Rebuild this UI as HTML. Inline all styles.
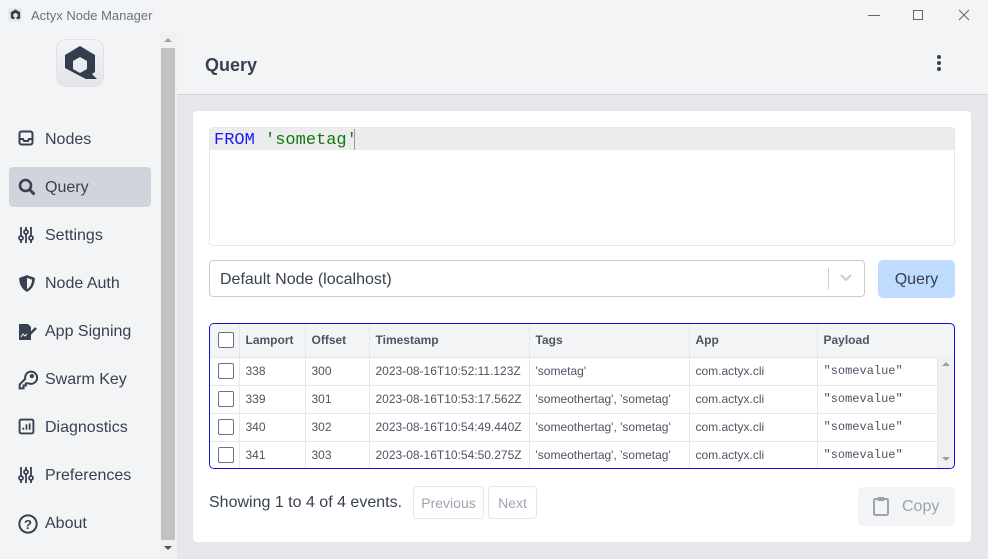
<!DOCTYPE html>
<html><head><style>
*{box-sizing:border-box;margin:0;padding:0}
body{width:988px;height:559px;overflow:hidden;background:#f3f4f6;font-family:"Liberation Sans",sans-serif;color:#374151;position:relative}
.abs{position:absolute}
.nav{position:absolute;left:9px;width:142px;height:40px;display:flex;align-items:center;font-size:16px;color:#374151}
.nav svg{position:absolute;left:9px;top:11px}
.nav span{position:absolute;left:36px;top:12px}
table{border-collapse:collapse;font-size:12px;color:#4b5563}
td,th{border-right:1px solid #e5e7eb;border-bottom:1px solid #e5e7eb;padding-left:6px;text-align:left;height:28px}
th{height:33px;font-weight:bold;background:#f3f4f6;color:#4b5563}
.cb{display:inline-block;width:16px;height:16px;border:1px solid #6b7280;border-radius:2px;vertical-align:middle;background:#fff}
.mono{font-family:"Liberation Mono",monospace}
.btn{position:absolute;border:1px solid #e5e7eb;border-radius:4px;font-size:14px;color:#9ca3af;display:flex;align-items:center;justify-content:center}
</style></head><body>
<!-- title bar -->
<div class="abs" style="left:8px;top:8px;width:14px;height:14px;background:#e5e7eb;border-radius:3px"></div>
<svg class="abs" style="left:10px;top:9px" width="11" height="12" viewBox="0 0 40 44"><path d="M20 2L37 12V34L30 38L20 32L10 38L3 32V12Z" fill="#333d4e"/><path d="M20 14L28 19V28L20 33L12 28V19Z" fill="#e5e7eb"/></svg>
<div class="abs" style="left:31px;top:8px;font-size:13px;color:#6b7280">Actyx Node Manager</div>
<div class="abs" style="left:868px;top:15px;width:12px;height:1px;background:#666"></div>
<div class="abs" style="left:913px;top:10px;width:10px;height:10px;border:1px solid #666"></div>
<svg class="abs" style="left:958px;top:9px" width="12" height="12"><path d="M1 1L11 11M11 1L1 11" stroke="#666" stroke-width="1"/></svg>
<!-- sidebar -->
<div class="abs" style="left:56px;top:39px;width:48px;height:48px;border-radius:10px;background:linear-gradient(#f3f4f6,#e2e4e8);border:1px solid #e0e2e6"></div>
<svg class="abs" style="left:60px;top:43px" width="40" height="40" viewBox="0 0 40 40"><path d="M20 3L35 12V29L32 31L37 36H26L20 33L5 25V12Z" fill="#333d4e"/><path d="M20 14L27 18V26L20 30L13 26V18Z" fill="#e9ebee"/></svg>
<div class="abs" style="left:160px;top:32px;width:17px;height:527px;background:#f0f0f0"></div>
<div class="abs" style="left:161px;top:48px;width:14px;height:492px;background:#c1c1c1"></div>
<div class="abs" style="left:164px;top:38px;border:4px solid transparent;border-bottom:4px solid #a0a0a0;border-top:0"></div>
<div class="abs" style="left:164px;top:546px;border:4px solid transparent;border-top:4px solid #505050;border-bottom:0"></div>
<div class="abs" style="left:9px;top:167px;width:142px;height:40px;background:#d1d5db;border-radius:4px"></div>
<div class="nav" style="top:119px"><svg width="16" height="16" viewBox="0 0 16 16"><rect x="1.5" y="1.5" width="13" height="13" rx="2" fill="none" stroke="#374151" stroke-width="2"/><path d="M1.5 9H5L6 11H10L11 9H14.5" fill="none" stroke="#374151" stroke-width="2"/></svg><span>Nodes</span></div>
<div class="nav" style="top:167px"><svg width="18" height="18" viewBox="0 0 18 18"><circle cx="7.5" cy="7.5" r="5.5" fill="none" stroke="#374151" stroke-width="2.6"/><path d="M11.5 11.5L16.5 16.5" stroke="#374151" stroke-width="3"/></svg><span>Query</span></div>
<div class="nav" style="top:215px"><svg width="16" height="18" viewBox="0 0 16 18" stroke="#374151" stroke-width="1.8" fill="none"><path d="M3 1V17M8 1V17M13 1V17"/><circle cx="3" cy="12" r="2" fill="#f3f4f6"/><circle cx="8" cy="6" r="2" fill="#f3f4f6"/><circle cx="13" cy="12" r="2" fill="#f3f4f6"/></svg><span>Settings</span></div>
<div class="nav" style="top:263px"><svg width="18" height="19" viewBox="0 0 16 17"><path d="M8 1L15 3.5C15 10 12 14 8 16C4 14 1 10 1 3.5Z" fill="#374151"/><path d="M8 3.5L12.5 5C12.3 9.5 10.5 12 8 13.5Z" fill="#f3f4f6"/></svg><span>Node Auth</span></div>
<div class="nav" style="top:311px"><svg width="20" height="20" viewBox="0 0 20 18"><path d="M1 1H10L13 4V17H1Z" fill="#374151"/><path d="M3 14L5 11L7 13L9 11" stroke="#f3f4f6" stroke-width="1" fill="none"/><path d="M11 12L18 5" stroke="#374151" stroke-width="2.5"/></svg><span>App Signing</span></div>
<div class="nav" style="top:359px"><svg width="20" height="20" viewBox="0 0 18 18" fill="none" stroke="#374151" stroke-width="1.8"><path d="M11 1.5A5.5 5.5 0 1 1 9.5 12L7 12V14H5V16.5H1.5V13L6.5 8A5.5 5.5 0 0 1 11 1.5Z"/><circle cx="12.5" cy="5.5" r="1" fill="#374151"/></svg><span>Swarm Key</span></div>
<div class="nav" style="top:407px"><svg width="17" height="17" viewBox="0 0 16 16"><rect x="1.5" y="1.5" width="13" height="13" rx="1.5" fill="none" stroke="#374151" stroke-width="1.8"/><path d="M5 11V9M8 11V6M11 11V5" stroke="#374151" stroke-width="1.6"/></svg><span>Diagnostics</span></div>
<div class="nav" style="top:455px"><svg width="16" height="18" viewBox="0 0 16 18" stroke="#374151" stroke-width="1.8" fill="none"><path d="M3 1V17M8 1V17M13 1V17"/><circle cx="3" cy="12" r="2" fill="#f3f4f6"/><circle cx="8" cy="6" r="2" fill="#f3f4f6"/><circle cx="13" cy="12" r="2" fill="#f3f4f6"/></svg><span>Preferences</span></div>
<div class="nav" style="top:503px"><svg width="20" height="20" viewBox="0 0 18 18"><circle cx="9" cy="9" r="7.8" fill="none" stroke="#374151" stroke-width="1.8"/><text x="9" y="13.5" text-anchor="middle" font-size="12" font-weight="bold" fill="#374151" font-family="Liberation Sans">?</text></svg><span>About</span></div>
<!-- main -->
<div class="abs" style="left:177px;top:32px;width:811px;height:63px;background:#f3f4f6;border-bottom:1px solid #d1d5db"></div>
<div class="abs" style="left:205px;top:55px;font-size:18px;font-weight:bold;color:#374151">Query</div>
<div class="abs" style="left:937px;top:55px;width:4px;height:4px;border-radius:50%;background:#374151;box-shadow:0 6px 0 #374151,0 12px 0 #374151"></div>
<div class="abs" style="left:177px;top:95px;width:811px;height:464px;background:#e5e7eb"></div>
<div class="abs" style="left:193px;top:111px;width:778px;height:431px;background:#fff;border-radius:4px"></div>
<!-- editor -->
<div class="abs" style="left:209px;top:127px;width:746px;height:119px;border:1px solid #e5e7eb;border-radius:4px;background:#fff"></div>
<div class="abs" style="left:210px;top:128px;width:744px;height:22px;background:#ececec"></div>
<div class="abs mono" style="left:214px;top:131px;font-size:17px;color:#1a1aff">FROM <span style="color:#117711">'sometag'</span></div>
<div class="abs" style="left:354px;top:129px;width:1px;height:21px;background:#999"></div>
<!-- select -->
<div class="abs" style="left:209px;top:260px;width:656px;height:37px;border:1px solid #ccc;border-radius:4px;background:#fff"></div>
<div class="abs" style="left:220px;top:271px;font-size:16px;color:#374151">Default Node (localhost)</div>
<div class="abs" style="left:828px;top:268px;width:1px;height:21px;background:#ccc"></div>
<svg class="abs" style="left:840px;top:274px" width="12" height="8"><path d="M1 1L6 6L11 1" stroke="#ccc" stroke-width="2" fill="none"/></svg>
<div class="abs" style="left:878px;top:260px;width:77px;height:38px;background:#bfdbfe;border-radius:5px;font-size:16px;color:#374151;display:flex;align-items:center;justify-content:center;padding-top:2px">Query</div>
<!-- table -->
<div class="abs" style="left:209px;top:323px;width:746px;height:146px;border:1px solid #1010e0;border-radius:5px;overflow:hidden;background:#f3f4f6">
<table style="width:728px">
<tr><th style="width:29px;padding-left:8px"><span class="cb"></span></th><th style="width:66px">Lamport</th><th style="width:64px">Offset</th><th style="width:160px">Timestamp</th><th style="width:160px">Tags</th><th style="width:128px">App</th><th style="border-right:0">Payload</th></tr>
<tr style="background:#fff"><td style="padding-left:8px"><span class="cb"></span></td><td>338</td><td>300</td><td>2023-08-16T10:52:11.123Z</td><td>'sometag'</td><td>com.actyx.cli</td><td class="mono">"somevalue"</td></tr>
<tr style="background:#fff"><td style="padding-left:8px"><span class="cb"></span></td><td>339</td><td>301</td><td>2023-08-16T10:53:17.562Z</td><td>'someothertag', 'sometag'</td><td>com.actyx.cli</td><td class="mono">"somevalue"</td></tr>
<tr style="background:#fff"><td style="padding-left:8px"><span class="cb"></span></td><td>340</td><td>302</td><td>2023-08-16T10:54:49.440Z</td><td>'someothertag', 'sometag'</td><td>com.actyx.cli</td><td class="mono">"somevalue"</td></tr>
<tr style="background:#fff"><td style="padding-left:8px"><span class="cb"></span></td><td>341</td><td>303</td><td>2023-08-16T10:54:50.275Z</td><td>'someothertag', 'sometag'</td><td>com.actyx.cli</td><td class="mono">"somevalue"</td></tr>
</table>
<div class="abs" style="left:728px;top:33px;width:17px;height:112px;background:#f0f0f0"></div>
<div class="abs" style="left:732px;top:38px;border:4px solid transparent;border-bottom:4px solid #a0a0a0;border-top:0"></div>
<div class="abs" style="left:732px;top:133px;border:4px solid transparent;border-top:4px solid #a0a0a0;border-bottom:0"></div>
</div>
<!-- footer -->
<div class="abs" style="left:209px;top:494px;font-size:16px;color:#374151">Showing 1 to 4 of 4 events.</div>
<div class="btn" style="left:413px;top:486px;width:71px;height:33px">Previous</div>
<div class="btn" style="left:488px;top:486px;width:49px;height:33px">Next</div>
<div class="abs" style="left:858px;top:487px;width:97px;height:39px;background:#f3f4f6;border-radius:5px"></div>
<svg class="abs" style="left:873px;top:496px" width="16" height="20" viewBox="0 0 16 20"><rect x="1" y="3" width="14" height="16" rx="1.5" fill="none" stroke="#9ca3af" stroke-width="2"/><rect x="4.5" y="1" width="7" height="4" rx="1" fill="#9ca3af"/></svg>
<div class="abs" style="left:902px;top:498px;font-size:16px;color:#9ca3af">Copy</div>
</body></html>
